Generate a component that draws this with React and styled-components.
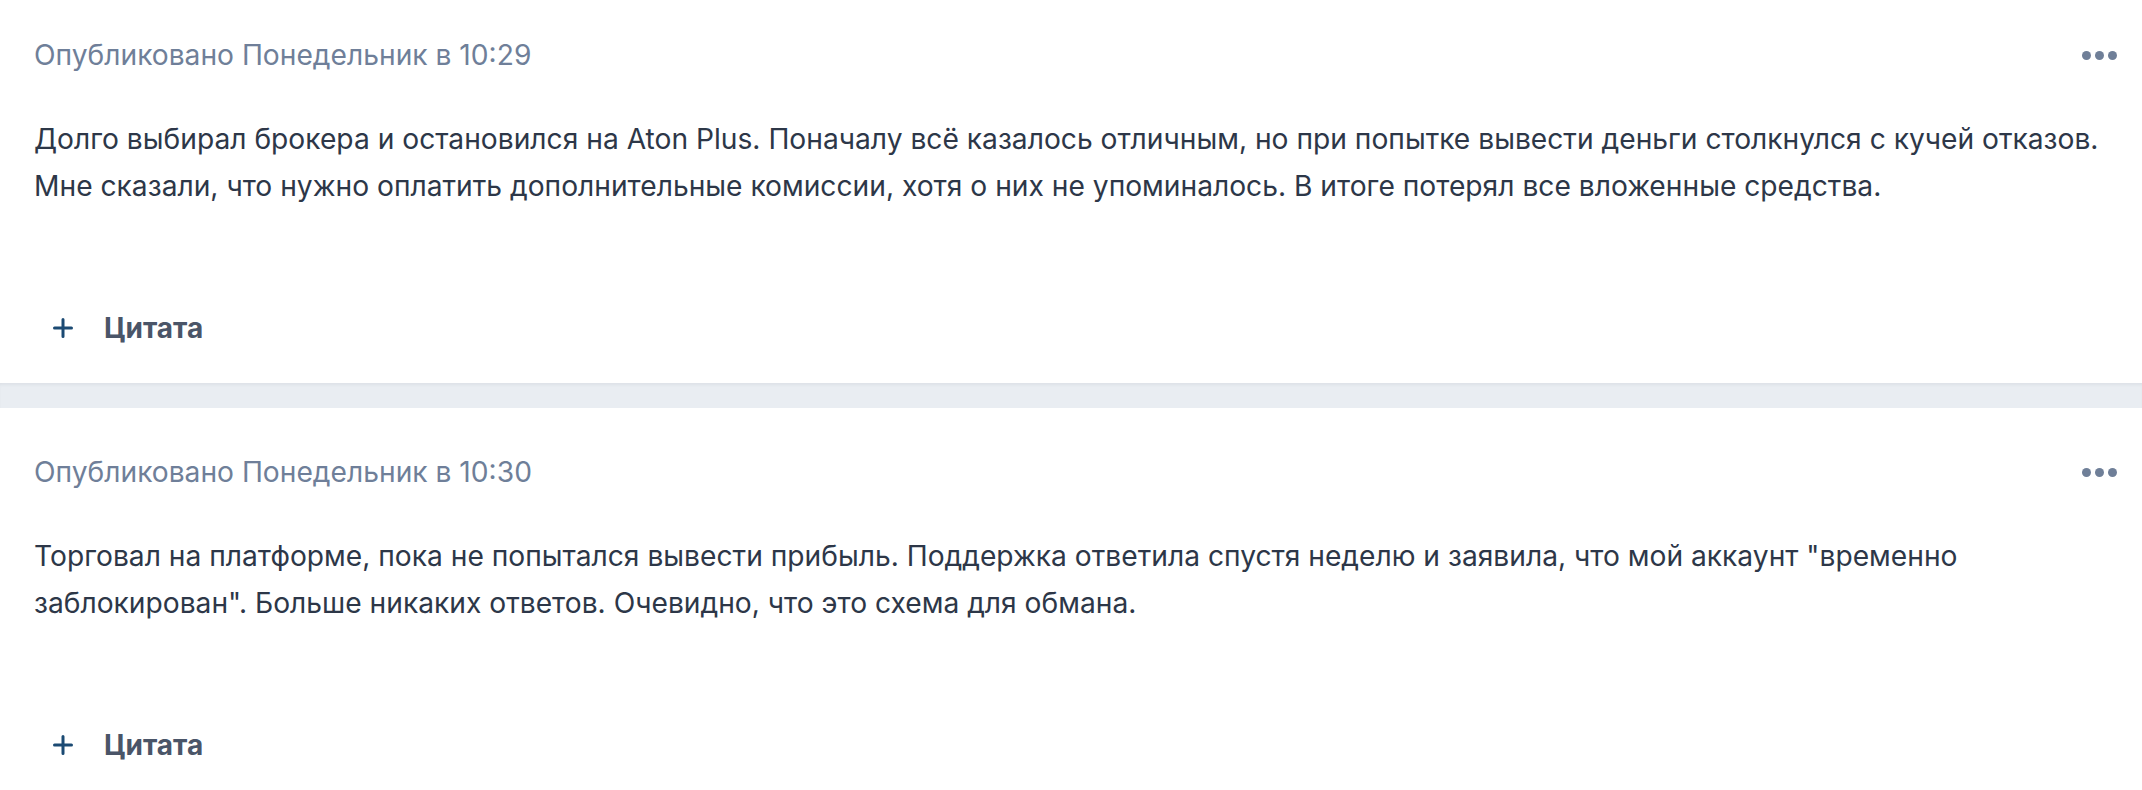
import React from "react";
import styled, { createGlobalStyle } from "styled-components";

const GlobalStyle = createGlobalStyle`
  html, body {
    margin: 0;
    padding: 0;
    background: #ffffff;
  }
  body {
    font-family: Inter, "Noto Sans", sans-serif;
    -webkit-font-smoothing: antialiased;
  }
`;

const posts = [
  {
    id: 1,
    time: "10:29",
    text: "Долго выбирал брокера и остановился на Aton Plus. Поначалу всё казалось отличным, но при попытке вывести деньги столкнулся с кучей отказов. Мне сказали, что нужно оплатить дополнительные комиссии, хотя о них не упоминалось. В итоге потерял все вложенные средства.",
  },
  {
    id: 2,
    time: "10:30",
    text: "Торговал на платформе, пока не попытался вывести прибыль. Поддержка ответила спустя неделю и заявила, что мой аккаунт \"временно заблокирован\". Больше никаких ответов. Очевидно, что это схема для обмана.",
  },
];

const Feed = styled.div`
  margin-top: -9px;
  display: flex;
  flex-direction: column;
`;

const Post = styled.article`
  background: #ffffff;
  padding: 44px 25px 0 34px;
  height: 392px;
  box-sizing: border-box;
  display: flex;
  flex-direction: column;
`;

const Divider = styled.div`
  height: 25px;
  background: #e9edf2;
  box-shadow: inset 0 3px 3px -1px rgba(30, 45, 70, 0.06);
`;

const Meta = styled.div`
  display: flex;
  align-items: center;
  justify-content: space-between;
  height: 40px;
`;

const Published = styled.span`
  font-size: 28.2px;
  color: #6f7f99;
`;

const MoreButton = styled.button`
  display: flex;
  gap: 4px;
  padding: 0;
  border: none;
  background: none;
  cursor: pointer;
  span {
    width: 9px;
    height: 9px;
    border-radius: 50%;
    background: #6f7f98;
  }
`;

const Body = styled.p`
  margin: 41px 0 0;
  font-size: 28.2px;
  line-height: 47px;
  color: #2d3748;
  max-width: 2080px;
`;

const Footer = styled.div`
  margin-top: auto;
  padding-bottom: 38px;
`;

const QuoteButton = styled.button`
  display: flex;
  align-items: center;
  gap: 31px;
  padding: 0 0 0 19px;
  border: none;
  background: none;
  cursor: pointer;
  font-family: inherit;
  font-size: 28px;
  font-weight: 700;
  color: #4a5568;
  svg {
    display: block;
  }
`;

const PlusIcon = () => (
  <svg width="20" height="20" viewBox="0 0 20 20" fill="none">
    <path d="M10 1.5v17M1.5 10h17" stroke="#1b4a73" strokeWidth="3" strokeLinecap="round" />
  </svg>
);

export default function App() {
  return (
    <>
      <GlobalStyle />
      <Feed>
        {posts.map((post, i) => (
          <React.Fragment key={post.id}>
            {i > 0 && <Divider />}
            <Post>
              <Meta>
                <Published>Опубликовано Понедельник в {post.time}</Published>
                <MoreButton aria-label="Ещё">
                  <span />
                  <span />
                  <span />
                </MoreButton>
              </Meta>
              <Body>{post.text}</Body>
              <Footer>
                <QuoteButton>
                  <PlusIcon />
                  Цитата
                </QuoteButton>
              </Footer>
            </Post>
          </React.Fragment>
        ))}
      </Feed>
    </>
  );
}
